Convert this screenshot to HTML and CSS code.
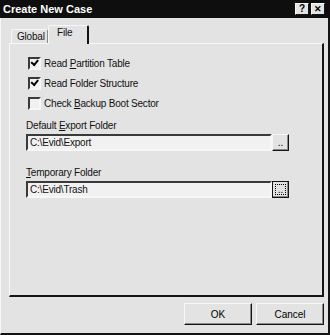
FILE: index.html
```html
<!DOCTYPE html>
<html>
<head>
  <title>Create New Case</title>
  <link rel="stylesheet" href="styles.css">
</head>
<body>
  <div class="dialog">
    <div class="titlebar">
      <span class="title">Create New Case</span>
      <div class="title-buttons">
        <button class="title-btn">?</button>
        <button class="title-btn close">&#x2715;</button>
      </div>
    </div>

    <div class="frame">
      <div class="tabs">
        <div class="tab">Global</div>
        <div class="tab active">File</div>
      </div>

      <div class="panel">
        <label class="check"><span class="box checked"></span><span>Read <u>P</u>artition Table</span></label>
        <label class="check"><span class="box checked"></span><span>Read Folder Structure</span></label>
        <label class="check"><span class="box"></span><span>Check <u>B</u>ackup Boot Sector</span></label>

        <div class="field">
          <div class="field-label">Default <u>E</u>xport Folder</div>
          <div class="field-row">
            <div class="input">C:\Evid\Export</div>
            <button class="browse">..</button>
          </div>
        </div>

        <div class="field">
          <div class="field-label"><u>T</u>emporary Folder</div>
          <div class="field-row">
            <div class="input">C:\Evid\Trash</div>
            <button class="browse focused"><span class="focus-rect">..</span></button>
          </div>
        </div>
      </div>

      <div class="actions">
        <button class="btn">OK</button>
        <button class="btn">Cancel</button>
      </div>
    </div>
  </div>
</body>
</html>
```

FILE: styles.css
```css
:root {
  --face: #e3e3e3;
  --light: #f7f7f7;
  --shadow: #8a8a8a;
  --dark: #141414;
  --field: #f1f1f1;
}

body {
  margin: 0;
  font-family: 'Liberation Sans', Arial, sans-serif;
  font-size: 10px;
  letter-spacing: -0.2px;
  color: #111;
  background: var(--face);
}

.dialog {
  width: 330px;
  height: 335px;
  display: flex;
  flex-direction: column;
  background: var(--face);
}

.titlebar {
  height: 18px;
  background: #0e0e0e;
  color: white;
  display: flex;
  align-items: center;
  justify-content: space-between;
  padding: 0 5px 0 3px;
}

.title {
  font-weight: bold;
  font-size: 11px;
  letter-spacing: 0;
}

.title-buttons {
  display: flex;
  gap: 2px;
}

.title-btn {
  width: 14px;
  height: 12px;
  padding: 0;
  background: var(--face);
  border: 1px solid;
  border-color: var(--light) var(--dark) var(--dark) var(--light);
  font-family: 'Liberation Sans', Arial, sans-serif;
  font-weight: bold;
  font-size: 10px;
  line-height: 10px;
  color: #000;
}

.title-btn.close {
  font-size: 9px;
}

.frame {
  flex: 1;
  display: flex;
  flex-direction: column;
  border-left: 1px solid var(--light);
  border-right: 2px solid var(--dark);
  border-bottom: 2px solid var(--dark);
  padding: 7px 4px 0 8px;
}

.tabs {
  height: 18px;
  display: flex;
  align-items: flex-end;
  padding-left: 2px;
}

.tab {
  width: 37px;
  height: 14px;
  box-sizing: border-box;
  padding: 1px 0 0 5px;
  border: 1px solid;
  border-bottom: none;
  border-color: var(--light) var(--shadow) transparent var(--light);
  border-radius: 2px 2px 0 0;
  line-height: 12px;
}

.tab.active {
  width: 41px;
  height: 19px;
  margin-bottom: -1px;
  padding: 1px 0 0 8px;
  background: var(--face);
  border-right: 2px solid var(--dark);
  position: relative;
  z-index: 1;
}

.panel {
  height: 254px;
  box-sizing: border-box;
  border: 1px solid var(--light);
  border-right: 2px solid var(--dark);
  border-bottom: 2px solid var(--dark);
  padding: 12px 30px 0 16px;
}

.check {
  height: 20px;
  display: flex;
  align-items: center;
  gap: 3px;
  margin-left: 2px;
  position: relative;
  top: -3px;
}

.box {
  width: 13px;
  height: 13px;
  box-sizing: border-box;
  background: var(--field);
  border: 2px solid;
  border-color: #3a3a3a var(--light) var(--light) #3a3a3a;
  position: relative;
}

.box.checked::after {
  content: '';
  position: absolute;
  left: 1px;
  top: 0px;
  width: 5px;
  height: 3px;
  border-left: 2px solid #000;
  border-bottom: 2px solid #000;
  transform: rotate(-50deg) translate(0px, 1px);
  transform-origin: 3px 3px;
}

.field {
  margin-top: 3px;
}

.field + .field {
  margin-top: 15px;
}

.field-label {
  height: 13px;
  line-height: 13px;
  margin-bottom: 2px;
}

.field-row {
  display: flex;
}

.input {
  width: 246px;
  height: 17px;
  box-sizing: border-box;
  background: var(--field);
  border: 2px solid;
  border-color: #3a3a3a var(--light) var(--light) #3a3a3a;
  padding: 0 2px;
  line-height: 13px;
}

.browse {
  width: 17px;
  height: 17px;
  box-sizing: border-box;
  padding: 0;
  background: var(--face);
  border: 1px solid;
  border-color: var(--light) var(--dark) var(--dark) var(--light);
  box-shadow: inset -1px -1px 0 var(--shadow);
  font-family: 'Liberation Sans', Arial, sans-serif;
  font-size: 10px;
  line-height: 12px;
  color: #000;
}

.browse.focused {
  border: 1px solid var(--dark);
  padding: 2px;
}

.focus-rect {
  display: block;
  height: 9px;
  border: 1px dotted #000;
  line-height: 9px;
}

.actions {
  display: flex;
  justify-content: flex-end;
  gap: 4px;
  margin-top: 6px;
}

.btn {
  width: 68px;
  height: 22px;
  padding: 0;
  background: var(--face);
  border: 1px solid;
  border-color: var(--light) var(--dark) var(--dark) var(--light);
  box-shadow: inset -1px -1px 0 var(--shadow);
  font-family: 'Liberation Sans', Arial, sans-serif;
  font-size: 10px;
  color: #000;
}
```
